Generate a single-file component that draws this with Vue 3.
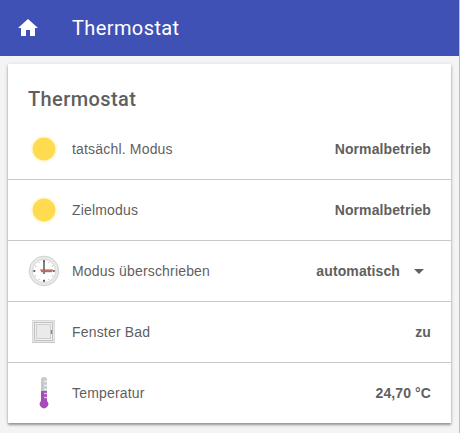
<script setup>
const rows = [
  { icon: 'sun', label: 'tatsächl. Modus', value: 'Normalbetrieb' },
  { icon: 'sun', label: 'Zielmodus', value: 'Normalbetrieb' },
  { icon: 'clock', label: 'Modus überschrieben', value: 'automatisch', select: true },
  { icon: 'window', label: 'Fenster Bad', value: 'zu' },
  { icon: 'thermometer', label: 'Temperatur', value: '24,70 °C' },
]
const ticks = Array.from({ length: 12 }, (_, i) => i * 30)
</script>

<template>
  <div class="page">
    <header class="toolbar">
      <svg class="home" viewBox="0 0 24 24" width="24" height="24">
        <path fill="#fff" d="M10 20v-6h4v6h5v-8h3L12 3 2 12h3v8z" />
      </svg>
      <h1>Thermostat</h1>
    </header>
    <main class="card">
      <h2>Thermostat</h2>
      <div v-for="row in rows" :key="row.label" class="row">
        <svg v-if="row.icon === 'sun'" class="icon" viewBox="0 0 32 32">
          <circle cx="16" cy="16" r="14" fill="#fffdf2" />
          <circle cx="16" cy="16" r="12.8" fill="#fff8dc" />
          <circle cx="16" cy="16" r="11.4" fill="#ffdc4f" />
        </svg>
        <svg v-else-if="row.icon === 'clock'" class="icon" viewBox="0 0 32 32">
          <circle cx="16" cy="16" r="14.8" fill="#e8e8e8" stroke="#d0d0d0" stroke-width="1" />
          <circle cx="16" cy="16" r="11.6" fill="#fff" stroke="#d6d6d6" stroke-width="1" />
          <path
            v-for="angle in ticks"
            :key="angle"
            d="M16 5.5v1.4"
            stroke="#c4c4c4"
            stroke-width="1"
            :transform="`rotate(${angle} 16 16)`"
          />
          <path d="M16 5.3v2M16 24.7v2M5.3 16h2M24.7 16h2" stroke="#444" stroke-width="1.7" />
          <path d="M16 19V7" stroke="#808080" stroke-width="2" />
          <path d="M13 16.2h11" stroke="#808080" stroke-width="2" />
          <path d="M12 15h13" stroke="#d34a4a" stroke-width="1" />
        </svg>
        <svg v-else-if="row.icon === 'window'" class="icon" viewBox="0 0 32 32">
          <rect x="4.5" y="4.5" width="22" height="22" fill="#e9e9e9" stroke="#dadada" />
          <rect x="6.5" y="6.5" width="18" height="18" fill="#f0f0f0" stroke="#c2c2c2" />
          <rect x="8.5" y="8.5" width="14" height="14" fill="#eaeaea" stroke="#cecece" />
          <path d="M4 26.5h23" stroke="#c8c8c8" />
          <path d="M23.5 14v4" stroke="#888" stroke-width="1.4" />
        </svg>
        <svg v-else class="icon" viewBox="0 0 32 32">
          <path d="M13 11V2.5q0-2.5 3-2.5t3 2.5V11z" fill="#c3cacd" />
          <path d="M13 14h6v10a4.2 4.2 0 1 1-6 0z" fill="#a64bb7" />
          <path d="M13 10h6v4h-6z" fill="#c3cacd" />
          <path d="M16 4.5h3M16 8.5h3M16 12.5h3" stroke="#edf0f1" stroke-width="1.6" />
          <path d="M16 16.5h3M16 20.5h3" stroke="#dcb8e2" stroke-width="1.6" />
        </svg>
        <span class="label">{{ row.label }}</span>
        <span class="value">{{ row.value }}</span>
        <svg v-if="row.select" class="caret" viewBox="0 0 24 24">
          <path d="M7 10l5 5 5-5z" fill="#616161" />
        </svg>
      </div>
    </main>
  </div>
</template>

<style>
body {
  margin: 0;
  background: #f4f4f4;
}
</style>

<style scoped>
.page {
  box-sizing: border-box;
  height: 433px;
  border-right: 1px solid #dfb1b1;
  background: #f4f4f4;
  color: #5f5f5f;
  font-family: "Liberation Sans", Arial, sans-serif;
  font-size: 14px;
  overflow: hidden;
}
.toolbar {
  display: flex;
  align-items: center;
  gap: 32px;
  height: 56px;
  padding-left: 16px;
  background: #3f51b5;
  color: #fff;
}
h1,
h2 {
  margin: 0;
  font-family: Roboto, sans-serif;
  font-size: 20px;
}
h1 {
  font-weight: 400;
  letter-spacing: 0.4px;
}
h2 {
  height: 55px;
  padding: 8px 20px 0;
  box-sizing: border-box;
  line-height: 54px;
  font-weight: 500;
  letter-spacing: 0.4px;
}
.card {
  margin: 8px;
  background: #fff;
  box-shadow: 0 2px 2px rgba(0, 0, 0, 0.3), 0 1px 4px rgba(0, 0, 0, 0.18);
}
.row {
  display: flex;
  align-items: center;
  box-sizing: border-box;
  height: 61px;
  padding: 0 20px;
  border-bottom: 1px solid #c8c8c8;
}
.row:last-child {
  height: 60px;
  border-bottom: 0;
}
.icon {
  width: 32px;
  height: 32px;
  margin-right: 12px;
}
.label {
  flex: 1;
  letter-spacing: 0.18px;
}
.value {
  font-weight: 700;
  letter-spacing: 0.11px;
}
.caret {
  width: 24px;
  height: 24px;
  margin-left: 7px;
}
</style>
